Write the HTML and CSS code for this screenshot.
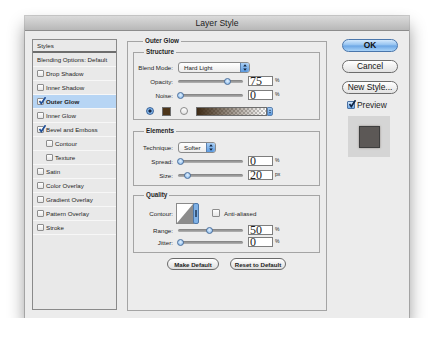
FILE: index.html
```html
<!DOCTYPE html>
<html lang="en">
<head>
  <meta charset="UTF-8">
  <meta name="viewport" content="width=device-width, initial-scale=1.0">
  <title>Layer Style</title>
  <link rel="stylesheet" href="styles.css">
</head>
<body>
<div class="page">
  <div class="dialog">
    <div class="titlebar">Layer Style</div>
    <div class="dialog-body">

      <ul class="style-list">
        <li class="head">Styles</li>
        <li class="blend">Blending Options: Default</li>
        <li><span class="box"></span>Drop Shadow</li>
        <li><span class="box"></span>Inner Shadow</li>
        <li class="selected"><span class="box"><svg viewBox="0 0 8 8"><path d="M1.5 4 L3.3 6.5 L7.5 0.2"/></svg></span>Outer Glow</li>
        <li><span class="box"></span>Inner Glow</li>
        <li><span class="box"><svg viewBox="0 0 8 8"><path d="M1.5 4 L3.3 6.5 L7.5 0.2"/></svg></span>Bevel and Emboss</li>
        <li class="sub"><span class="box"></span>Contour</li>
        <li class="sub"><span class="box"></span>Texture</li>
        <li><span class="box"></span>Satin</li>
        <li><span class="box"></span>Color Overlay</li>
        <li><span class="box"></span>Gradient Overlay</li>
        <li><span class="box"></span>Pattern Overlay</li>
        <li><span class="box"></span>Stroke</li>
      </ul>

      <fieldset class="panel">
        <legend>Outer Glow</legend>

        <fieldset class="group structure">
          <legend>Structure</legend>
          <div class="row">
            <span class="label">Blend Mode:</span>
            <div class="select blend-mode">
              <span class="select-text">Hard Light</span>
              <span class="arrows"><svg viewBox="0 0 8 10"><path d="M2 4 L4 1.5 L6 4 Z M2 6 L4 8.5 L6 6 Z"/></svg></span>
            </div>
          </div>
          <div class="row">
            <span class="label">Opacity:</span>
            <div class="slider"><span class="knob" style="left: 75%"></span></div>
            <span class="num">75</span><span class="unit">%</span>
          </div>
          <div class="row">
            <span class="label">Noise:</span>
            <div class="slider"><span class="knob" style="left: 3%"></span></div>
            <span class="num">0</span><span class="unit">%</span>
          </div>
          <div class="fill-row">
            <span class="radio on"></span>
            <span class="swatch"></span>
            <span class="radio"></span>
            <span class="gradient"></span>
            <span class="tab"><svg viewBox="0 0 6 10"><path d="M1.5 4 L3 2 L4.5 4 Z M1.5 6 L3 8 L4.5 6 Z"/></svg></span>
          </div>
        </fieldset>

        <fieldset class="group elements">
          <legend>Elements</legend>
          <div class="row">
            <span class="label">Technique:</span>
            <div class="select technique">
              <span class="select-text">Softer</span>
              <span class="arrows"><svg viewBox="0 0 8 10"><path d="M2 4 L4 1.5 L6 4 Z M2 6 L4 8.5 L6 6 Z"/></svg></span>
            </div>
          </div>
          <div class="row">
            <span class="label">Spread:</span>
            <div class="slider"><span class="knob" style="left: 3%"></span></div>
            <span class="num">0</span><span class="unit">%</span>
          </div>
          <div class="row">
            <span class="label">Size:</span>
            <div class="slider"><span class="knob" style="left: 14%"></span></div>
            <span class="num">20</span><span class="unit">px</span>
          </div>
        </fieldset>

        <fieldset class="group quality">
          <legend>Quality</legend>
          <div class="row contour-row">
            <span class="label">Contour:</span>
            <svg class="contour" viewBox="0 0 23 21">
              <rect x="0.5" y="0.5" width="17" height="20" fill="#fff" stroke="#8a8a8a"/>
              <polygon points="1,20 17,1 17,20" fill="#8c8c8c"/>
              <rect x="17.5" y="0.5" width="5" height="20" rx="1.5" fill="#7fb1e6" stroke="#4d78aa"/>
              <rect x="19.3" y="7" width="1.4" height="7" fill="#1c2f4a"/>
            </svg>
            <span class="box anti"></span>
            <span class="anti-text">Anti-aliased</span>
          </div>
          <div class="row short">
            <span class="label">Range:</span>
            <div class="slider"><span class="knob" style="left: 48%"></span></div>
            <span class="num">50</span><span class="unit">%</span>
          </div>
          <div class="row short">
            <span class="label">Jitter:</span>
            <div class="slider"><span class="knob" style="left: 3%"></span></div>
            <span class="num">0</span><span class="unit">%</span>
          </div>
        </fieldset>

        <div class="default-buttons">
          <button class="pill make">Make Default</button>
          <button class="pill reset">Reset to Default</button>
        </div>
      </fieldset>

      <div class="side">
        <button class="btn ok">OK</button>
        <button class="btn">Cancel</button>
        <button class="btn">New Style...</button>
        <div class="preview-check">
          <span class="box blue"><svg viewBox="0 0 8 8"><path d="M1.5 4 L3.3 6.5 L7.5 0.2"/></svg></span>
          Preview
        </div>
        <div class="preview"><div class="preview-inner"></div></div>
      </div>

    </div>
  </div>
</div>
</body>
</html>
```

FILE: styles.css
```css
body {
  margin: 0;
  background: #fff;
  font-family: "Liberation Sans", Arial, sans-serif;
  color: #1e1e1e;
}

.page {
  padding: 16px 0 0 25px;
}

.dialog {
  width: 384px;
  height: 302px;
  background: #ececec;
  box-shadow: 0 0 0 1px rgba(0, 0, 0, 0.2), 0 10px 16px rgba(0, 0, 0, 0.42);
}

.titlebar {
  height: 15px;
  line-height: 15px;
  text-align: center;
  font-size: 8.6px;
  color: #222;
  background: linear-gradient(#dadada, #b8b8b8);
  border-bottom: 1px solid #8c8c8c;
  box-sizing: border-box;
}

.dialog-body {
  display: flex;
  align-items: flex-start;
  padding: 8px 0 0 7px;
}

/* left list of styles */
.style-list {
  list-style: none;
  margin: 0 10px 0 0;
  padding: 0;
  width: 85px;
  height: 271px;
  box-sizing: border-box;
  border: 1px solid #8a8a8a;
  background: #e9e9e9;
  font-size: 6.2px;
}

.style-list li {
  height: 14px;
  box-sizing: border-box;
  display: flex;
  align-items: center;
  padding-left: 4px;
  border-bottom: 1px solid #f7f7f7;
}

.style-list li.head {
  height: 13px;
  border-bottom: 2px solid #6d6d6d;
}

.style-list li.sub {
  padding-left: 13px;
}

.style-list li.selected {
  background: #b7d5f4;
  font-weight: bold;
}

.box {
  width: 7px;
  height: 7px;
  box-sizing: border-box;
  border: 1px solid #8d8d8d;
  border-radius: 1px;
  background: linear-gradient(#fff, #e6e6e6);
  margin-right: 2px;
  display: inline-block;
  position: relative;
  flex: none;
}

.box svg {
  position: absolute;
  left: 0;
  top: -2px;
  width: 8px;
  height: 8px;
}

.box path {
  fill: none;
  stroke: #1f4f98;
  stroke-width: 1.6;
}

/* middle panel */
fieldset {
  margin: 0;
  min-width: 0;
  border: 1px solid #a4a4a4;
  box-sizing: border-box;
}

legend {
  padding: 0 2px;
  font-size: 6.3px;
  font-weight: bold;
  line-height: 10px;
}

.panel {
  width: 200px;
  height: 275px;
  margin: -3px 15px 0 0;
  padding: 1px 6px 0 5px;
}

.panel > legend {
  margin-left: 10px;
}

.group {
  padding: 3px 0 1px 0;
}

.group > legend {
  margin-left: 10px;
}

.elements {
  margin-top: 6px;
  padding-top: 4px;
  padding-bottom: 3px;
}

.quality {
  margin-top: 4px;
  padding-top: 2px;
  padding-bottom: 4px;
}

.row {
  display: flex;
  align-items: center;
  height: 14px;
}

.row.short {
  height: 12px;
}

.label {
  width: 39px;
  margin-right: 5px;
  text-align: right;
  font-size: 6.2px;
}

.select {
  display: flex;
  height: 11px;
  box-sizing: border-box;
  border: 1px solid #8a8a8a;
  border-radius: 3px;
  background: linear-gradient(#fff, #ececec);
  overflow: hidden;
}

.blend-mode {
  width: 72px;
}

.technique {
  width: 38px;
}

.select-text {
  flex: 1;
  font-size: 6.2px;
  line-height: 9px;
  padding-left: 5px;
}

.arrows {
  width: 8px;
  background: linear-gradient(#a9cff5, #5b9ae0);
  border-left: 1px solid #5c82b0;
}

.arrows svg {
  display: block;
  width: 8px;
  height: 9px;
}

.arrows path,
.tab path {
  fill: #10223c;
}

.slider {
  position: relative;
  width: 65px;
  height: 3px;
  margin-right: 5px;
  border-radius: 2px;
  background: linear-gradient(#7e7e7e, #b4b4b4);
}

.knob {
  position: absolute;
  top: -2px;
  width: 7px;
  height: 7px;
  box-sizing: border-box;
  margin-left: -3px;
  border-radius: 50%;
  border: 1px solid #4b6f9c;
  background: radial-gradient(circle at 50% 40%, #e4f1fd, #7db3ea);
}

.num {
  width: 25px;
  height: 10px;
  box-sizing: border-box;
  border: 1px solid #7d7d7d;
  background: #fff;
  font-family: "Liberation Serif", "Times New Roman", serif;
  font-size: 12px;
  line-height: 8px;
  padding-left: 1px;
}

.unit {
  font-size: 5px;
  margin-left: 2px;
  align-self: flex-start;
  margin-top: 3px;
}

.short .unit {
  margin-top: 2px;
}

.fill-row {
  display: flex;
  align-items: center;
  height: 14px;
  margin-top: 2px;
  padding-left: 12px;
}

.radio {
  width: 8px;
  height: 8px;
  box-sizing: border-box;
  border-radius: 50%;
  border: 1px solid #8a8a8a;
  background: linear-gradient(#fff, #e2e2e2);
}

.radio.on {
  border-color: #40679a;
  background: radial-gradient(circle, #16294a 0 1.4px, #8fc0f0 1.8px, #4f8fd6);
}

.swatch {
  width: 9px;
  height: 9px;
  margin: 0 9px 0 8px;
  box-sizing: border-box;
  border: 1px solid #6e6e6e;
  background: #4d3519;
}

.gradient {
  width: 71px;
  height: 9px;
  margin-left: 8px;
  box-sizing: border-box;
  border: 1px solid #6e6e6e;
  background:
    linear-gradient(to right, #3d2a15, rgba(61, 42, 21, 0)),
    repeating-conic-gradient(#c9c9c9 0 25%, #fff 0 50%) 0 0 / 4px 4px;
}

.tab {
  width: 6px;
  height: 9px;
  box-sizing: border-box;
  border: 1px solid #5c82b0;
  border-radius: 0 2px 2px 0;
  background: linear-gradient(#a9cff5, #5b9ae0);
}

.tab svg {
  display: block;
  width: 4px;
  height: 7px;
}

.contour-row {
  height: 22px;
}

.contour-row .label {
  margin-right: 3px;
}

.contour {
  width: 23px;
  height: 21px;
}

.box.anti {
  width: 8px;
  height: 8px;
  margin-left: 13px;
}

.anti-text {
  font-size: 6.2px;
  margin-left: 2px;
}

.default-buttons {
  display: flex;
  justify-content: center;
  gap: 11px;
  margin-top: 5px;
}

.pill {
  height: 12px;
  padding: 0;
  border: 1px solid #6a6a6a;
  border-radius: 7px;
  background: linear-gradient(#fff, #dedede);
  font-family: inherit;
  font-size: 6.1px;
  font-weight: bold;
  color: #222;
}

.make {
  width: 52px;
}

.reset {
  width: 56px;
}

/* right column */
.side {
  width: 56px;
  display: flex;
  flex-direction: column;
}

.btn {
  height: 13px;
  margin-bottom: 8px;
  padding: 0;
  border: 1px solid #6c6c6c;
  border-radius: 7px;
  background: linear-gradient(#fff, #e2e2e2);
  font-family: inherit;
  font-size: 8.4px;
  color: #111;
  line-height: 11px;
}

.btn.ok {
  font-weight: bold;
  border-color: #4a76ab;
  background: linear-gradient(#d3e8fc, #8fc0f0 48%, #6aa5e4 52%, #a9d3f8);
}

.btn:nth-of-type(3) {
  margin-bottom: 4px;
}

.preview-check {
  display: flex;
  align-items: center;
  height: 14px;
  padding-left: 5px;
  font-size: 8.4px;
}

.box.blue {
  width: 8px;
  height: 8px;
  border-color: #4a71a3;
  background: linear-gradient(#cfe5fb, #6ea8e6);
}

.box.blue path {
  stroke: #0f2341;
}

.preview {
  width: 42px;
  height: 41px;
  margin: 4px 0 0 6px;
  background: #d5d5d5;
  display: flex;
  align-items: center;
  justify-content: center;
}

.preview-inner {
  width: 21px;
  height: 22px;
  box-sizing: border-box;
  border: 1px solid #3e3e3e;
  background: #5c5856;
  box-shadow: 0 0 2px rgba(120, 110, 100, 0.7);
}
```
